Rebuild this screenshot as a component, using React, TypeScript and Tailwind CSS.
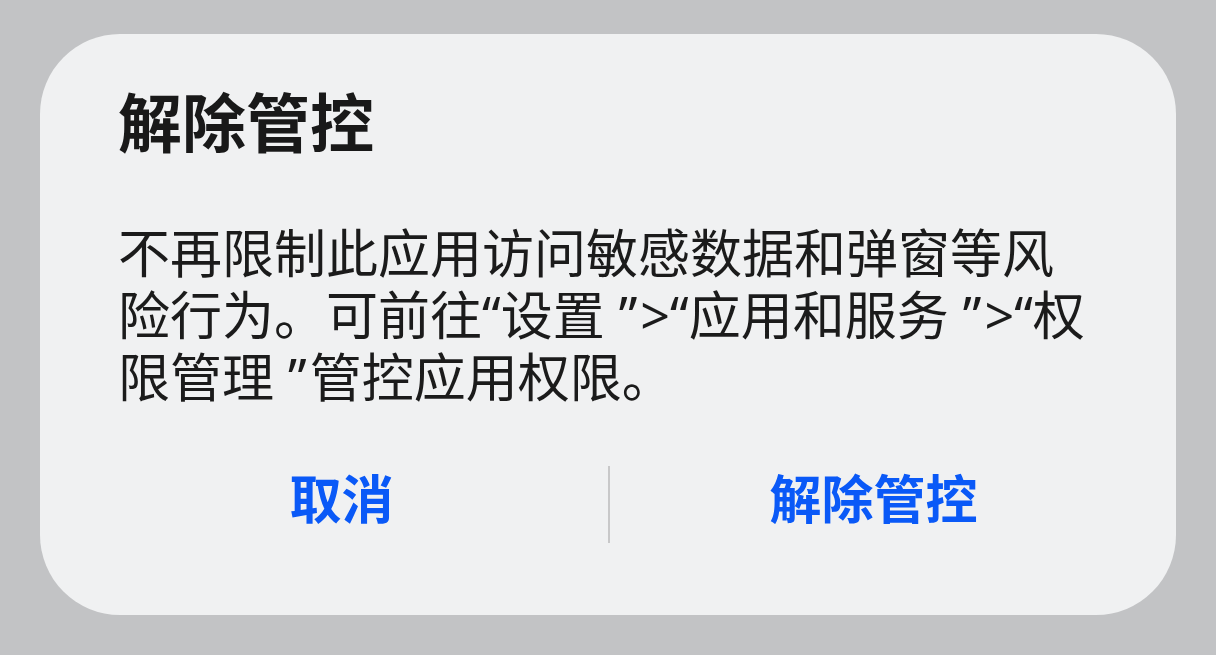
import React from 'react';

const FONT = '"Noto Sans", "Noto Sans CJK SC", sans-serif';

const lines = [
  '不再限制此应用访问敏感数据和弹窗等风',
  '险行为。可前往“设置”>“应用和服务”>“权',
  '限管理”管控应用权限。',
];

// closing quotes sit a little away from the preceding character
function Line({ text }: { text: string }) {
  const parts = text.split('”');
  return (
    <span className="block whitespace-nowrap">
      {parts.map((p, i) => (
        <React.Fragment key={i}>
          {i > 0 && <span className="ml-[14px] mr-[3px]">”</span>}
          {p}
        </React.Fragment>
      ))}
    </span>
  );
}

function ActionButton({ label, className }: { label: string; className: string }) {
  return (
    <button className={`flex h-full items-center justify-center pb-[12px] text-[52px] leading-[62px] font-semibold text-[#0a59f7] ${className}`}>
      {label}
    </button>
  );
}

export default function App() {
  return (
    <div className="w-[1216px] h-[655px] bg-[#c2c3c5] px-[40px] pt-[34px]" style={{ fontFamily: FONT }}>
      <div className="h-[581px] rounded-[80px] bg-[#f0f1f2] pt-[51px] pl-[78px]">
        <h1 className="text-[64px] leading-[76px] font-semibold text-[#191919]">解除管控</h1>

        <p className="mt-[61px] text-[52px] leading-[62px] text-[#1b1b1b]">
          {lines.map((l) => (
            <Line key={l} text={l} />
          ))}
        </p>

        <div className="mt-[58px] flex h-[77px] -ml-[43px]">
          <ActionButton label="取消" className="w-[533px]" />
          <div className="w-[2px] h-full bg-[#c8c8c9]" />
          <ActionButton label="解除管控" className="w-[527px]" />
        </div>
      </div>
    </div>
  );
}
